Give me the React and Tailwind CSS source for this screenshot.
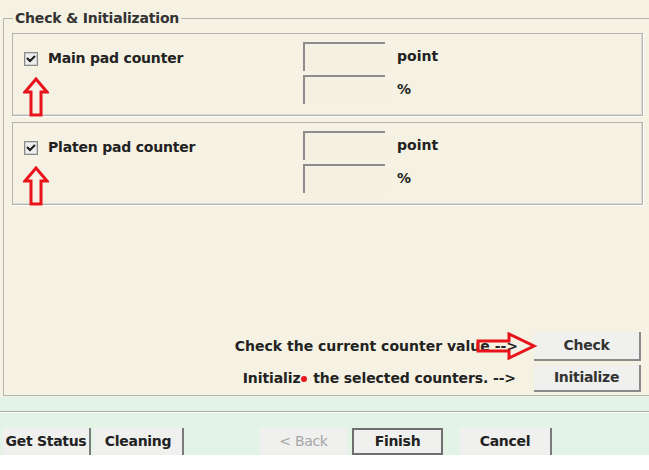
import React from "react";

const font = { fontFamily: '"DejaVu Sans", Verdana, sans-serif' };

function Check() {
  return (
    <svg width="14" height="14" viewBox="0 0 14 14" className="shrink-0">
      <rect x="0.5" y="0.5" width="13" height="13" fill="#f4f4f0" stroke="#8a8a8a" />
      <rect x="1.5" y="1.5" width="11" height="11" fill="#eeeeee" stroke="#cfcfcf" />
      <path d="M3 6 L6 9 L11 4" stroke="#1a1a1a" strokeWidth="2" fill="none" />
    </svg>
  );
}

function UpArrow() {
  return (
    <svg width="26" height="40" viewBox="0 0 26 40">
      <polygon points="13,2 24,15 18,15 18,38 8,38 8,15 2,15" fill="#f7f1e6" stroke="#e8141b" strokeWidth="3" strokeLinejoin="miter" />
    </svg>
  );
}

function Field() {
  return <div className="w-[82px] h-[29px] border-t-2 border-l-2 border-[#8c8c8c] bg-[#f4f1e2]" />;
}

function CounterBox({ label }) {
  return (
    <div className="h-[83px] border border-[#b3b3b0] shadow-[inset_-1px_-1px_0_#dcdcd6,1px_1px_0_#ffffff] flex">
      <div className="w-[290px] pl-[11px] pt-[14px] flex flex-col">
        <div className="flex items-center gap-[10px]">
          <Check />
          <span className="text-[14px] font-bold text-[#222] tracking-[-0.2px]">{label}</span>
        </div>
        <div className="mt-[8px] -ml-[1px]">
          <UpArrow />
        </div>
      </div>
      <div className="pt-[8px] flex flex-col gap-[4px]">
        <div className="flex items-center gap-[12px]">
          <Field />
          <span className="text-[14px] font-bold text-[#222]">point</span>
        </div>
        <div className="flex items-center gap-[12px]">
          <Field />
          <span className="text-[14px] font-bold text-[#222]">%</span>
        </div>
      </div>
    </div>
  );
}

function Btn({ children, className = "" }) {
  return (
    <div className={"flex items-center justify-center bg-[#f0f0ee] text-[14px] font-bold tracking-[-0.3px] " + className}>
      {children}
    </div>
  );
}

export default function App() {
  return (
    <div className="w-[649px] h-[470px] bg-white overflow-hidden" style={font}>
      <div className="h-[397px] bg-[#f5f2e3] pt-[8px] pl-[3px]">
        <fieldset className="h-[388px] w-[660px] border border-[#b5b5b0] px-[8px]">
          <legend className="px-[2px] ml-[1px] text-[14px] font-bold text-[#333] tracking-[-0.2px]">Check &amp; Initialization</legend>
          <div className="w-[631px] mt-[4px] flex flex-col gap-[6px]">
            <CounterBox label="Main pad counter" />
            <CounterBox label="Platen pad counter" />
          </div>
          <div className="w-[629px] mt-[127px] flex flex-col items-end gap-[4px] text-[14px] font-bold text-[#222]">
            <div className="relative flex items-center gap-[16px]">
              <span>Check the current counter value --&gt;</span>
              <Btn className="w-[107px] h-[29px] border-r-2 border-b-2 border-[#8a8a8a] text-[#333]">Check</Btn>
              <svg className="absolute right-[103px] top-[0px]" width="62" height="28" viewBox="0 0 62 28">
                <polygon points="2,9 33,9 33,2 58,14 33,26 33,19 2,19" fill="none" stroke="#e8141b" strokeWidth="3" />
              </svg>
            </div>
            <div className="flex items-center gap-[18px]">
              <span className="tracking-[-0.1px]">
                Initializ<span className="inline-block w-[6px] h-[6px] rounded-full bg-[#e8141b] align-middle mx-[1px]" /> the selected counters. --&gt;
              </span>
              <Btn className="w-[107px] h-[27px] border-r-2 border-b-2 border-[#8a8a8a] text-[#333]">Initialize</Btn>
            </div>
          </div>
        </fieldset>
      </div>
      <div className="h-[58px] bg-[#e3f4e6] pt-[14px]">
        <div className="h-[2px] bg-[#a9aca9] border-b border-white" />
        <div className="flex items-end mt-[15px] h-[27px] pl-[3px] text-[#222]">
          <Btn className="w-[88px] h-[27px] border-r-2 border-[#7a7a7a]">Get Status</Btn>
          <Btn className="w-[90px] h-[27px] ml-[3px] border-r-2 border-[#7a7a7a]">Cleaning</Btn>
          <Btn className="w-[87px] h-[27px] ml-[76px] text-[#a6a6a6] font-normal">&lt; Back</Btn>
          <Btn className="w-[91px] h-[27px] ml-[5px] border-2 border-[#6f6f6f]">Finish</Btn>
          <Btn className="w-[92px] h-[27px] ml-[17px] border-r-2 border-[#7a7a7a]">Cancel</Btn>
        </div>
      </div>
    </div>
  );
}
